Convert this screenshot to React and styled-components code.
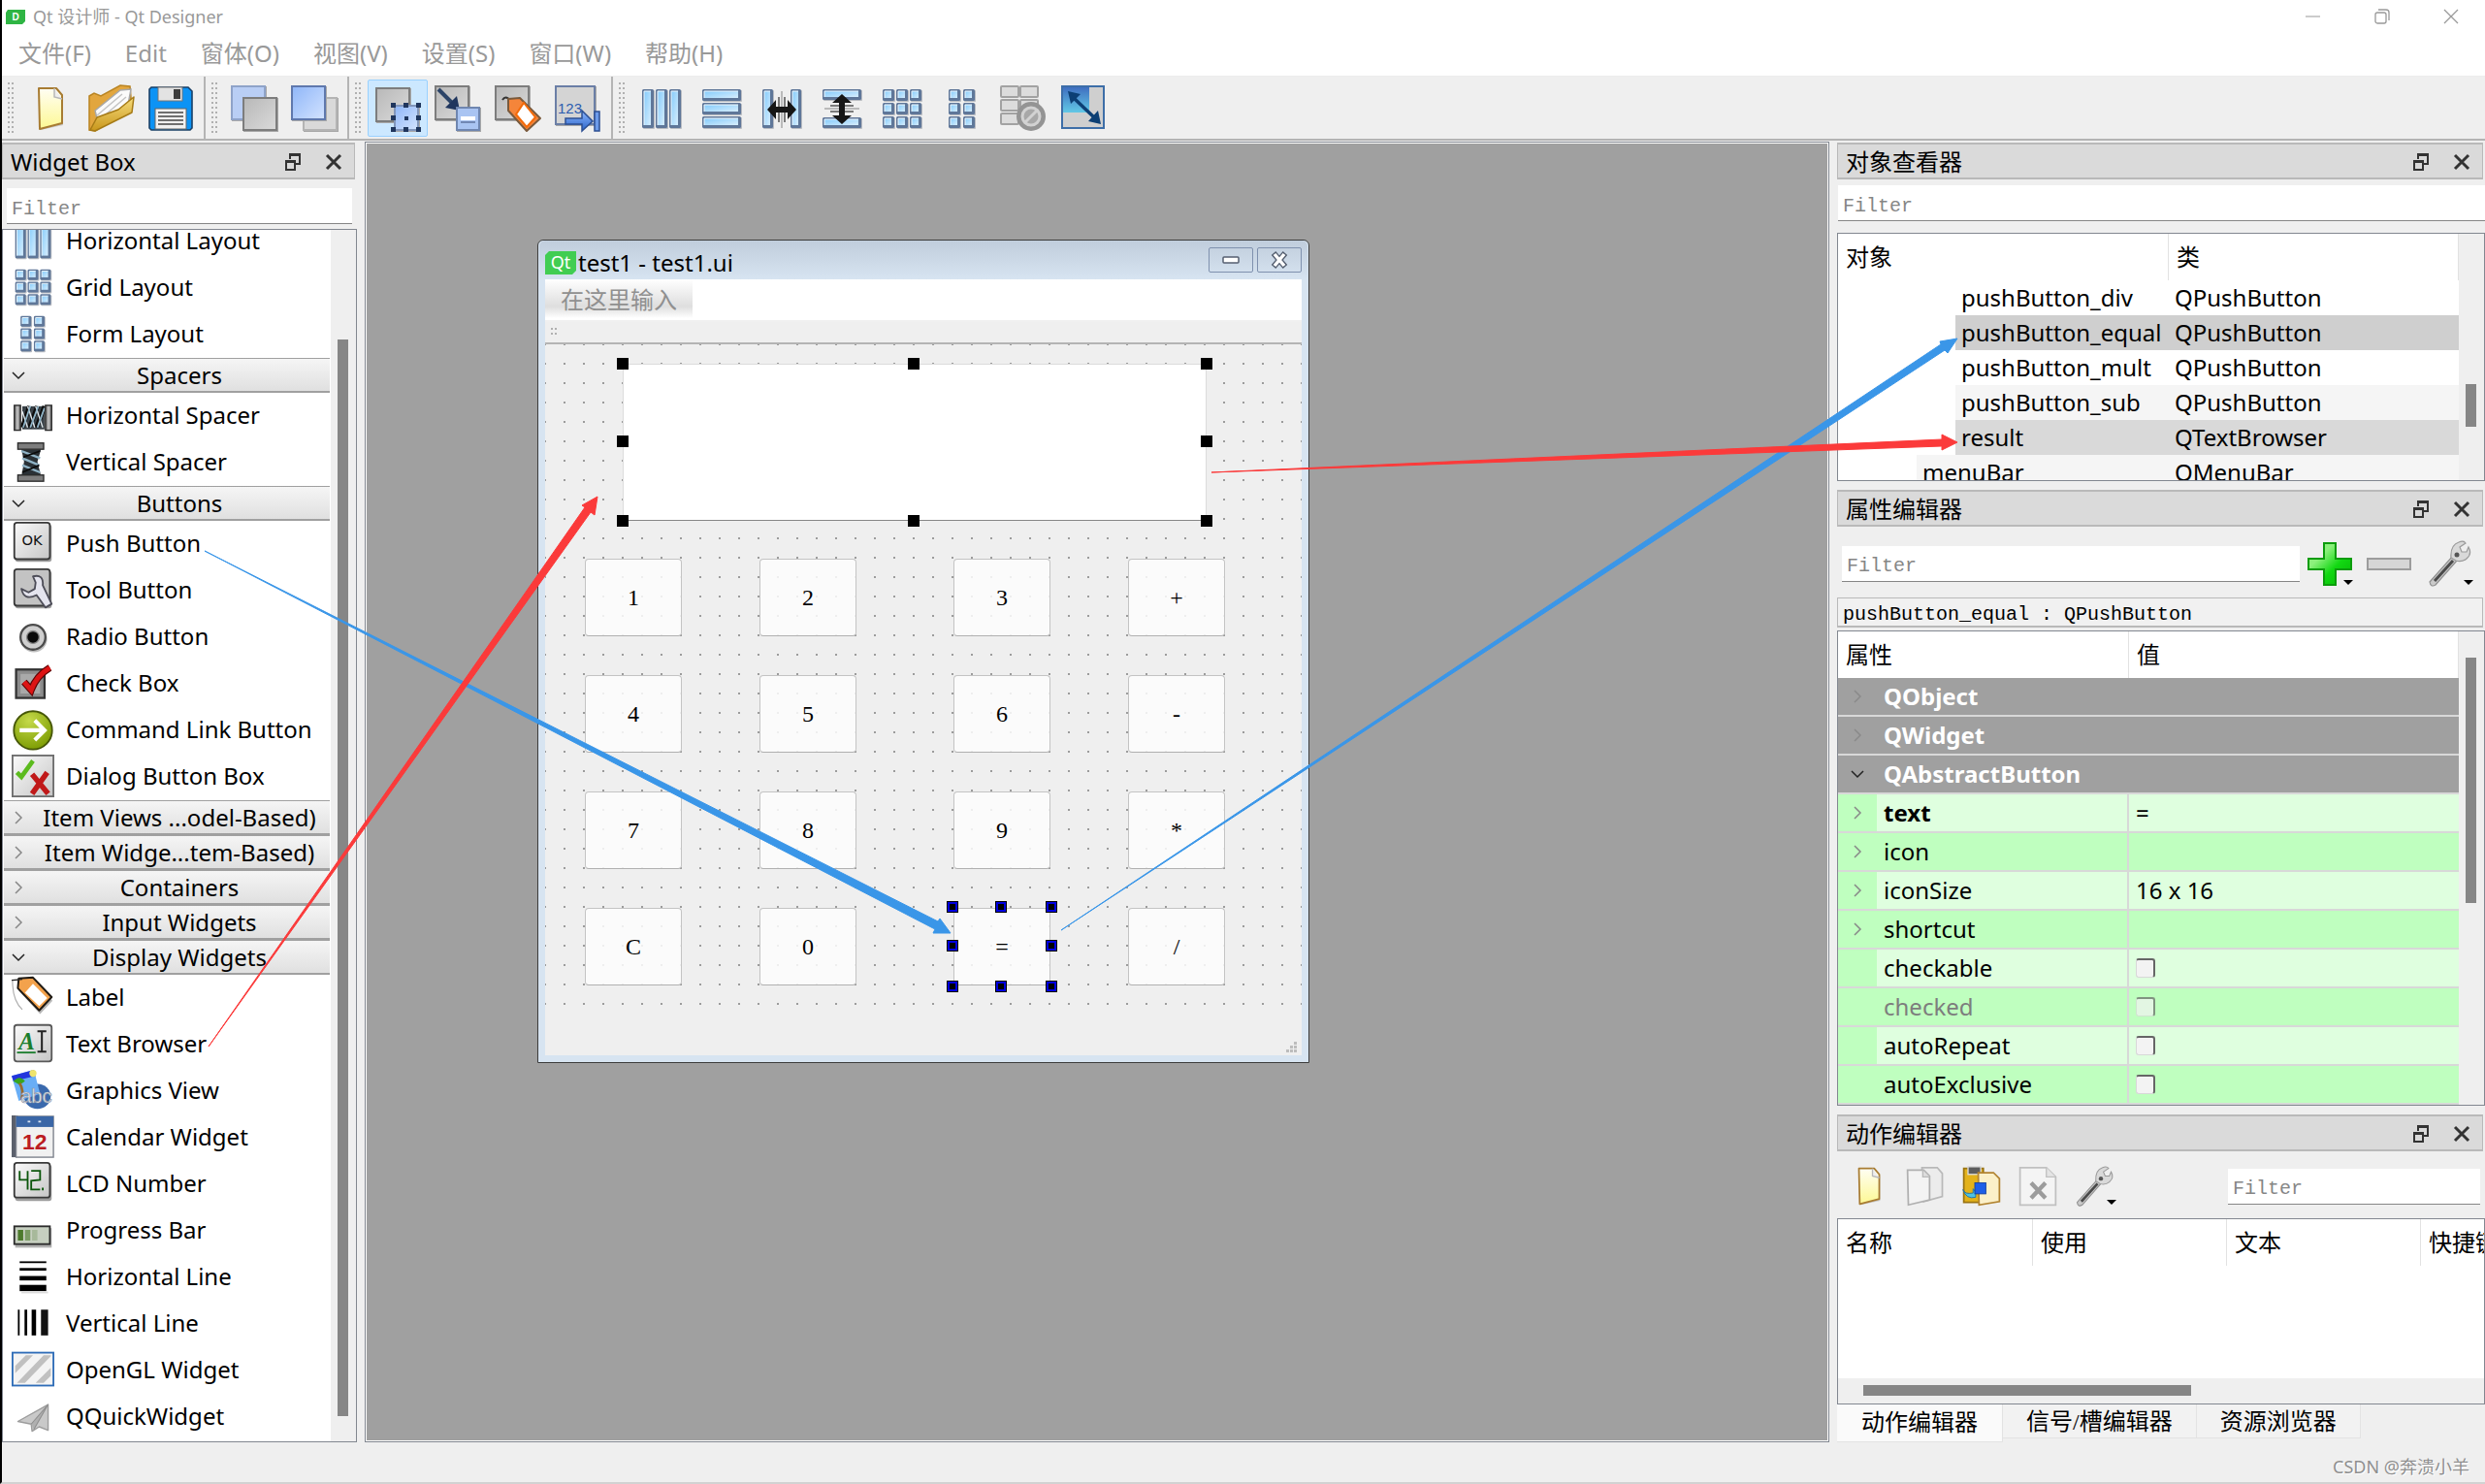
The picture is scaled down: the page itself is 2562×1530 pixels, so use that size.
import React from 'react';
import styled, { createGlobalStyle } from 'styled-components';

const UI_FONT = '"Noto Sans", "Noto Sans CJK SC", sans-serif';
const MONO_FONT = '"Liberation Mono", "Noto Sans CJK SC", monospace';
const SERIF_FONT = '"Liberation Serif", "Noto Sans CJK SC", serif';

const GlobalStyle = createGlobalStyle`
    * {
        box-sizing: border-box;
    }
    body {
        margin: 0;
        background: #efefef;
        color: #000;
        font-family: ${UI_FONT};
        font-size: 24px;
        line-height: 36px;
    }
    button {
        margin: 0;
        padding: 0;
        border: 0;
        background: none;
        color: inherit;
        font: inherit;
    }
    ul {
        margin: 0;
        padding: 0;
        list-style: none;
    }
    svg {
        display: block;
        overflow: visible;
    }
`;

/* ---------- icons, all on a 48 x 48 grid ---------- */

const Defs = () => (
    <DefsSvg width="0" height="0" aria-hidden="true">
        <defs>
            <linearGradient id="bar" x1="0" y1="0" x2="1" y2="1">
                <stop offset="0" stopColor="#84cbfb" />
                <stop offset="1" stopColor="#d6edfd" />
            </linearGradient>
            <linearGradient id="gray" x1="0" y1="0" x2="1" y2="1">
                <stop offset="0" stopColor="#b8b8b8" />
                <stop offset="1" stopColor="#dadada" />
            </linearGradient>
            <linearGradient id="blue" x1="0" y1="0" x2="1" y2="1">
                <stop offset="0" stopColor="#8fb6f8" />
                <stop offset="1" stopColor="#d3e3ff" />
            </linearGradient>
            <linearGradient id="paper" x1="0" y1="0" x2="0" y2="1">
                <stop offset="0" stopColor="#fffef4" />
                <stop offset="1" stopColor="#fdf893" />
            </linearGradient>
            <linearGradient id="gold" x1="0" y1="0" x2="0" y2="1">
                <stop offset="0" stopColor="#f6dc7c" />
                <stop offset="1" stopColor="#c9971c" />
            </linearGradient>
            <linearGradient id="key" x1="0" y1="0" x2="1" y2="1">
                <stop offset="0" stopColor="#fafafa" />
                <stop offset="1" stopColor="#c6c6c6" />
            </linearGradient>
            <linearGradient id="plus" x1="0" y1="0" x2="1" y2="1">
                <stop offset="0.3" stopColor="#8cf07c" />
                <stop offset="0.6" stopColor="#12d812" />
                <stop offset="1" stopColor="#04b404" />
            </linearGradient>
            <linearGradient id="sky" x1="0" y1="0" x2="0" y2="1">
                <stop offset="0" stopColor="#3f6fc0" />
                <stop offset="1" stopColor="#62c8e6" />
            </linearGradient>
            <linearGradient id="steel" x1="0" y1="0" x2="1" y2="0">
                <stop offset="0" stopColor="#5d5d5d" />
                <stop offset="0.5" stopColor="#c9c9c9" />
                <stop offset="1" stopColor="#5d5d5d" />
            </linearGradient>
            <radialGradient id="lime" cx="0.4" cy="0.25" r="0.8">
                <stop offset="0" stopColor="#c5da4a" />
                <stop offset="1" stopColor="#7a9a00" />
            </radialGradient>
            <linearGradient id="arrow" x1="0" y1="0" x2="0" y2="1">
                <stop offset="0" stopColor="#8db8ff" />
                <stop offset="1" stopColor="#2b63c8" />
            </linearGradient>
        </defs>
    </DefsSvg>
);

const DefsSvg = styled('svg')`
    position: absolute;
`;

const Cell = ({ x, y, w, h }) => (
    <>
        <rect x={x + 1} y={y + 1} width={w} height={h} rx="1" fill="#b9bcc2" />
        <rect x={x} y={y} width={w} height={h} rx="1.5" fill="#5f7799" />
        <rect x={x + 2} y={y + 2} width={w - 5} height={h - 5} fill="url(#bar)" />
        <path d={`M${x + 2} ${y + h - 3}V${y + 2}H${x + w - 3}`} fill="none" stroke="#eef8ff" strokeWidth="1" />
    </>
);

const Sheet = ({ x, y, w, h, fill = 'url(#gray)', stroke = '#7d7d7d' }) => (
    <>
        <rect x={x + 1} y={y + 1} width={w} height={h} fill="#a8a8a8" />
        <rect x={x + 1} y={y + 1} width={w - 2} height={h - 2} fill={fill} stroke={stroke} strokeWidth="2" />
    </>
);

const Wrench = () => (
    <>
        <path d="M4 43 L27 17 L32 21 L10 46 Q5 49 4 43Z" fill="#c9c9c9" stroke="#8f8f8f" strokeWidth="1.2" />
        <path d="M9 42 L28 21" stroke="#4a4a4a" strokeWidth="3" />
        <path d="M26 18 Q25 5 34 2 Q39 0 41 3 L35 7 L37 12 L42 12 L44 7 Q48 14 42 19 Q37 23 31 21 Z" fill="#d9d9d9" stroke="#9a9a9a" strokeWidth="1.2" />
        <circle cx="32" cy="15" r="2.5" fill="#555" />
    </>
);

const glyphs = {
    newForm: (
        <>
            <path d="M13 4 H31 L37 11 V41 L14 46 Z" fill="#c8c8c8" />
            <path d="M12 3 H30 L36 10 V39 L13 45 Z" fill="url(#paper)" stroke="#a87c32" strokeWidth="2" strokeLinejoin="round" />
            <path d="M28 3 L28 12 L36 14" fill="#eee" stroke="#b8b8b8" strokeWidth="1.5" />
        </>
    ),
    open: (
        <>
            <path d="M2 11 L7 8 L14 11 L34 0 L44 1 L46 24 L8 47 L2 46 Z" fill="#e2a63e" stroke="#b98422" strokeWidth="1.5" />
            <path d="M8 26 L34 5 L45 4 L42 20 L12 42 Z" fill="#fbfbfb" stroke="#a8a8a8" strokeWidth="1.5" />
            <path d="M10 31 L36 9 M12 36 L40 12" stroke="#c4c4c4" strokeWidth="1.5" />
            <path d="M3 46 L10 33 L32 25 L48 12 L46 28 L8 47 Z" fill="url(#gold)" stroke="#a67b17" strokeWidth="1.5" strokeLinejoin="round" />
        </>
    ),
    save: (
        <>
            <path d="M4 2 H42 L46 6 V44 L44 46 H4 L2 44 V4 Z" fill="#0c93f5" stroke="#1a4067" strokeWidth="1.6" />
            <rect x="11" y="2" width="25" height="14" fill="#e3e3e3" stroke="#777" />
            <rect x="27" y="4" width="7" height="10" fill="#3d3d3d" />
            <rect x="8" y="24" width="32" height="21" fill="#f1f1f1" stroke="#666" />
            <path d="M11 28 H37 M11 32 H37 M11 36 H37 M11 40 H37" stroke="#444" strokeWidth="1.6" />
        </>
    ),
    lower: (
        <>
            <Sheet x={0} y={0} w={36} h={36} fill="#b9cef5" stroke="#8fa3c9" />
            <Sheet x={12} y={12} w={36} h={35} />
        </>
    ),
    raise: (
        <>
            <Sheet x={12} y={12} w={36} h={35} fill="#d9d9d9" stroke="#b4b4b4" />
            <Sheet x={0} y={0} w={36} h={36} fill="url(#blue)" stroke="#5f78ad" />
        </>
    ),
    editWidgets: (
        <>
            <Sheet x={1} y={2} w={36} h={36} />
            <Sheet x={20} y={20} w={26} h={27} fill="url(#blue)" stroke="#8296bb" />
            {[[17, 18], [30, 18], [43, 18], [17, 31], [43, 31], [17, 43], [30, 43], [43, 43]].map(([x, y]) => (
                <rect key={`${x}-${y}`} x={x} y={y} width="5" height="5" fill="#20365e" />
            ))}
            <rect x="31" y="32" width="4" height="4" fill="#20365e" />
        </>
    ),
    editSignals: (
        <>
            <Sheet x={0} y={0} w={36} h={36} />
            <path d="M4 4 L20 20" stroke="#2c4468" strokeWidth="4" />
            <path d="M26 26 L11 23 L23 11 Z" fill="#20365e" />
            <Sheet x={22} y={22} w={25} h={25} fill="#a9c4f2" stroke="#6f86b0" />
            <path d="M27 34 H42" stroke="#fff" strokeWidth="4" />
            <path d="M27 38 H42" stroke="#7188b4" strokeWidth="2" />
        </>
    ),
    editBuddies: (
        <>
            <Sheet x={0} y={0} w={36} h={36} />
            <path d="M8 15 Q12 9 18 18" fill="none" stroke="#333" strokeWidth="2" />
            <path d="M14 14 L26 13 L47 34 L33 47 L14 26 Z" fill="#f5853a" stroke="#7a5a3c" strokeWidth="2" strokeLinejoin="round" />
            <path d="M30 18 L42 33 L33 43 L22 30 Z" fill="#fff" stroke="#f36a0a" strokeWidth="2" />
        </>
    ),
    editTabOrder: (
        <>
            <Sheet x={0} y={0} w={42} h={41} fill="#d4d4d4" stroke="#6b7fa6" />
            <text x="3" y="29" fontFamily="Liberation Sans, sans-serif" fontSize="15" fill="#2b5cb0">123</text>
            <path d="M11 34 H28 V26 L39 37 L28 47 V40 H11 Z" fill="url(#arrow)" stroke="#2c4f93" strokeWidth="1.5" />
            <rect x="41" y="27" width="5" height="20" fill="#6d9bea" stroke="#2c4f93" strokeWidth="1.5" />
        </>
    ),
    layoutH: (
        <>
            <Cell x={4} y={4} w={12} h={40} />
            <Cell x={18} y={4} w={12} h={40} />
            <Cell x={32} y={4} w={12} h={40} />
        </>
    ),
    layoutV: (
        <>
            <Cell x={4} y={4} w={40} h={12} />
            <Cell x={4} y={18} w={40} h={12} />
            <Cell x={4} y={32} w={40} h={12} />
        </>
    ),
    splitH: (
        <>
            <Cell x={4} y={4} w={11} h={40} />
            <Cell x={33} y={4} w={11} h={40} />
            <path d="M24 6 V44" stroke="#a8a8a8" strokeWidth="1.5" />
            <path d="M21 12 V38 M27 12 V38" stroke="#555" strokeWidth="1.5" />
            <path d="M9 25 L18 15 V22 H30 V15 L39 25 L30 35 V28 H18 V35 Z" fill="#161616" />
        </>
    ),
    splitV: (
        <>
            <Cell x={4} y={4} w={40} h={11} />
            <Cell x={4} y={33} w={40} h={11} />
            <path d="M6 24 H42" stroke="#a8a8a8" strokeWidth="1.5" />
            <path d="M12 21 H36 M12 27 H36" stroke="#555" strokeWidth="1.5" />
            <path d="M24 9 L34 18 H27 V31 H34 L24 40 L14 31 H21 V18 H14 Z" fill="#161616" />
        </>
    ),
    grid: (
        <>
            {[4, 18, 32].map(y => [4, 18, 32].map(x => <Cell key={`${x}-${y}`} x={x} y={y} w={12} h={12} />))}
        </>
    ),
    form: (
        <>
            {[4, 18, 32].map(y => [10, 25].map(x => <Cell key={`${x}-${y}`} x={x} y={y} w={12} h={12} />))}
        </>
    ),
    breakLayout: (
        <>
            {[1, 15, 29].map(y => [2, 22].map(x => (
                <rect key={`${x}-${y}`} x={x} y={y} width="18" height="11" rx="1" fill="#dcdcdc" stroke="#a2a2a2" strokeWidth="2" />
            )))}
            <circle cx="33" cy="32" r="15" fill="#949494" />
            <circle cx="33" cy="32" r="9" fill="#a8a8a8" stroke="#d2d2d2" strokeWidth="3" />
            <path d="M27 38 L39 26" stroke="#d2d2d2" strokeWidth="3" />
        </>
    ),
    adjustSize: (
        <>
            <rect x="3" y="1" width="43" height="43" fill="#cfcfcf" stroke="#3d6ea8" strokeWidth="2" />
            <rect x="4" y="2" width="27" height="26" fill="url(#sky)" />
            <path d="M15 13 L36 33" stroke="#0c3f74" strokeWidth="3.5" />
            <path d="M9 6 L22 9 L12 19 Z M43 40 L30 37 L40 26 Z" fill="#0c3f74" />
        </>
    ),
    hSpacer: (
        <>
            <path d="M12 14 V40 H37 V14 Z" fill="#3a4248" />
            <path d="M12 38 L20 14 M20 38 L29 14 M28 38 L37 14" stroke="#0c0c0c" strokeWidth="5" />
            <path d="M12 20 L18 38 M18 14 L26 38 M27 14 L35 38" stroke="#dfe6ea" strokeWidth="1.5" />
            <path d="M13 38 L21 14 M21 38 L30 14 M29 38 L37 16" stroke="#8fb3c6" strokeWidth="2" />
            <rect x="3" y="13" width="7" height="28" fill="url(#steel)" stroke="#2c2c2c" strokeWidth="1.5" />
            <rect x="38" y="13" width="7" height="28" fill="url(#steel)" stroke="#2c2c2c" strokeWidth="1.5" />
        </>
    ),
    vSpacer: (
        <>
            <path d="M11 10 H33 L29 24 L33 40 H11 L14 24 Z" fill="#2a3136" />
            <path d="M11 12 L32 20 M12 20 L31 28 M12 28 L32 36" stroke="#8fb3c6" strokeWidth="2.5" />
            <path d="M32 12 L13 19 M31 28 L12 36" stroke="#0c0c0c" strokeWidth="2" />
            <rect x="7" y="3" width="29" height="7" fill="#7d7d7d" stroke="#2c2c2c" strokeWidth="1.5" />
            <rect x="7" y="39" width="29" height="7" fill="#7d7d7d" stroke="#2c2c2c" strokeWidth="1.5" />
        </>
    ),
    pushButton: (
        <>
            <rect x="4" y="3" width="41" height="42" rx="3" fill="#9d9d9d" />
            <rect x="3" y="1" width="40" height="41" rx="3" fill="url(#key)" stroke="#3a3a3a" strokeWidth="2" />
            <text x="23" y="26" textAnchor="middle" fontFamily="DejaVu Sans, sans-serif" fontSize="16" fill="#111">OK</text>
        </>
    ),
    toolButton: (
        <>
            <rect x="4" y="3" width="41" height="42" rx="3" fill="#9d9d9d" />
            <rect x="3" y="1" width="40" height="41" rx="3" fill="#c3c3c3" stroke="#3a3a3a" strokeWidth="2" />
            <path d="M24 9 Q36 6 35 19 L45 40 L38 44 L28 30 Q14 37 11 23 L19 27 L26 23 L27 16 Z" fill="#e4e4ee" stroke="#4d4d58" strokeWidth="2" strokeLinejoin="round" />
        </>
    ),
    radio: (
        <>
            <circle cx="25" cy="27" r="15" fill="#bdbdbd" />
            <circle cx="24" cy="25" r="14" fill="#cfcfcf" stroke="#4b4b4b" strokeWidth="2.5" />
            <circle cx="24" cy="25" r="7" fill="#0a0a0a" stroke="#8a8a8a" strokeWidth="1.5" />
        </>
    ),
    checkBox: (
        <>
            <rect x="5" y="9" width="32" height="32" fill="#8c8c8c" stroke="#333" strokeWidth="2.5" />
            <rect x="10" y="14" width="22" height="22" fill="#a9a9a9" />
            <path d="M14 23 L22 32 Q28 16 43 7" fill="none" stroke="#5c0505" strokeWidth="8" />
            <path d="M14 23 L22 32 Q28 16 43 7" fill="none" stroke="#dd1414" strokeWidth="5.5" />
        </>
    ),
    commandLink: (
        <>
            <circle cx="24" cy="25" r="21.5" fill="url(#lime)" stroke="#465707" strokeWidth="2" />
            <path d="M9 25 H36 M26 14 L37 25 L26 36" fill="none" stroke="#fff" strokeWidth="4.5" />
        </>
    ),
    dialogBox: (
        <>
            <rect x="1" y="1" width="46" height="46" fill="url(#key)" stroke="#6d6d6d" strokeWidth="2" />
            <path d="M6 20 L11 25 L24 7" fill="none" stroke="#5cbb1e" strokeWidth="5" />
            <path d="M23 22 L41 44 M40 20 L23 44" stroke="#c01919" strokeWidth="6" />
        </>
    ),
    label: (
        <>
            <path d="M0 5 H10 M1 6 Q1 28 12 38" fill="none" stroke="#aaa" strokeWidth="1.2" />
            <path d="M9 7 L24 6 L46 28 L32 43 L8 17 Z" fill="#b9b9b9" />
            <path d="M8 3 L24 2 L45 24 L31 39 L7 14 Z" fill="#f3a24c" stroke="#1f1a14" strokeWidth="2.2" strokeLinejoin="round" />
            <path d="M24 9 L40 25 L31 34 L15 19 Z" fill="#fff" />
            <path d="M0 5 L12 4" stroke="#222" strokeWidth="1.5" />
        </>
    ),
    textBrowser: (
        <>
            <rect x="3" y="3" width="42" height="41" rx="3" fill="url(#key)" stroke="#5a5a5a" strokeWidth="2" />
            <text x="8" y="30" fontFamily="Liberation Serif, serif" fontSize="27" fontStyle="italic" fontWeight="700" fill="#1a7d2c">A</text>
            <path d="M6 34 H27" stroke="#1a7d2c" strokeWidth="2" />
            <path d="M29 10 H39 M34 10 V33 M29 33 H39" stroke="#222" strokeWidth="2.2" />
        </>
    ),
    graphicsView: (
        <>
            <ellipse cx="29" cy="31" rx="15" ry="14" fill="#3a69ad" />
            <path d="M0 8 L25 1 L32 28 L8 36 Z" fill="#69aef5" />
            <path d="M0 8 L25 1 L27 8 L2 14 Z" fill="#2336dd" />
            <path d="M2 14 Q9 6 15 14 L9 18 Z" fill="#37a61e" />
            <path d="M9 16 Q14 24 11 35" fill="none" stroke="#9a6a2c" strokeWidth="3" />
            <circle cx="24" cy="5" r="4" fill="#efe46b" />
            <text x="10" y="38" fontFamily="Liberation Sans, sans-serif" fontSize="22" fill="#eef0f4" stroke="#8d97a8" strokeWidth="0.8">abc</text>
        </>
    ),
    calendar: (
        <>
            <rect x="0" y="0" width="7" height="47" fill="#5a5f6b" />
            <rect x="5" y="1" width="42" height="46" fill="#f1f1f1" stroke="#7d828c" strokeWidth="1.5" />
            <rect x="5" y="1" width="42" height="12" fill="#3a66a6" />
            <path d="M18 7 H21 M30 7 H33" stroke="#dbe5f3" strokeWidth="2" />
            <text x="26" y="38" textAnchor="middle" fontFamily="Liberation Sans, sans-serif" fontSize="25" fontWeight="700" fill="#bb1c22">12</text>
        </>
    ),
    lcd: (
        <>
            <rect x="4" y="3" width="41" height="41" rx="3" fill="#9d9d9d" />
            <rect x="3" y="1" width="40" height="39" rx="3" fill="url(#key)" stroke="#3a3a3a" strokeWidth="2" />
            <path d="M9 10 V20 H18 M18 10 V31 M22 10 H32 V20 L22 21 V31 H32 M35 29 V32" fill="none" stroke="#0b560b" strokeWidth="2" />
        </>
    ),
    progress: (
        <>
            <rect x="4" y="22" width="41" height="22" fill="#b0b0b0" />
            <rect x="3" y="20" width="40" height="20" fill="#c6cfc0" stroke="#2c2c2c" strokeWidth="2" />
            <rect x="7" y="24" width="6" height="12" fill="#4c7a2c" />
            <rect x="15" y="24" width="6" height="12" fill="#7c9c66" />
            <rect x="23" y="24" width="6" height="12" fill="#a7b99b" />
        </>
    ),
    hLine: (
        <>
            <path d="M9 8 H39" stroke="#000" strokeWidth="2" />
            <path d="M9 16 H39" stroke="#000" strokeWidth="3" />
            <path d="M9 26 H39" stroke="#000" strokeWidth="5" />
            <path d="M9 37 H39" stroke="#000" strokeWidth="7" />
            <path d="M11 42 H41" stroke="#dcdcdc" strokeWidth="2" />
        </>
    ),
    vLine: (
        <>
            <path d="M8 9 V38" stroke="#000" strokeWidth="2" />
            <path d="M16 9 V38" stroke="#000" strokeWidth="3" />
            <path d="M25 9 V38" stroke="#000" strokeWidth="5" />
            <path d="M37 9 V38" stroke="#111" strokeWidth="8" />
        </>
    ),
    openGl: (
        <>
            <rect x="1" y="5" width="46" height="37" fill="#f4f4f4" stroke="#2f6db8" strokeWidth="2" />
            <path d="M4 20 L16 8 H24 L4 28 Z M6 39 L36 8 H44 L44 9 L15 39 Z M27 39 L44 22 V31 L36 39 Z" fill="#c0c0c0" />
        </>
    ),
    quickWidget: (
        <>
            <path d="M7 30 L41 11 L41 40 L31 36 L23 41 L22 33 Z" fill="#c9c9c9" stroke="#9d9d9d" strokeWidth="1.5" strokeLinejoin="round" />
            <path d="M22 33 L41 11 L25 39" fill="#b0b0b0" stroke="#8f8f8f" strokeWidth="1.2" />
        </>
    ),
    plus: (
        <path d="M18 3 H30 V19 H46 V30 H30 V46 H18 V30 H2 V19 H18 Z" fill="url(#plus)" stroke="#0c9c0c" strokeWidth="2" />
    ),
    minus: <rect x="2" y="19" width="44" height="11" fill="#d6d6d6" stroke="#9c9c9c" strokeWidth="2" />,
    wrench: <Wrench />,
    copy: (
        <>
            <path d="M20 2 H38 L44 9 V36 L22 42 Z" fill="#ececec" stroke="#b9b9b9" strokeWidth="2" />
            <path d="M3 5 H22 L29 12 V40 L4 46 Z" fill="#f3f3f3" stroke="#b0b0b0" strokeWidth="2" />
            <path d="M21 5 V13 H29" fill="#ddd" stroke="#b9b9b9" strokeWidth="1.5" />
        </>
    ),
    paste: (
        <>
            <path d="M3 3 H26 V43 H3 Z" fill="#e3b21a" stroke="#9a7412" strokeWidth="2" />
            <rect x="8" y="1" width="15" height="9" fill="#5d5d5d" stroke="#ddd" strokeWidth="1.5" />
            <path d="M20 8 H38 L45 15 V42 L21 46 Z" fill="#fbf0c9" stroke="#b28431" strokeWidth="2" />
            <path d="M2 28 Q4 34 14 32 V27 L17 31 V37 Q6 40 2 28 Z" fill="#4cc3e4" stroke="#1b6fa8" strokeWidth="1" />
            <rect x="16" y="20" width="13" height="13" fill="#1d5fe8" stroke="#123f9e" strokeWidth="1" />
        </>
    ),
    remove: (
        <>
            <path d="M3 2 H34 L45 13 V46 H3 Z" fill="#f4f4f4" stroke="#c0c0c0" strokeWidth="2" />
            <path d="M34 2 V13 H45" fill="#e4e4e4" stroke="#c0c0c0" strokeWidth="1.5" />
            <path d="M16 20 L33 38 M33 20 L16 38" stroke="#9c9c9c" strokeWidth="5" />
        </>
    )
};

const Icon = ({ name, size = 48 }) => (
    <svg width={size} height={size} viewBox="0 0 48 48" aria-hidden="true">{glyphs[name]}</svg>
);

/* ---------- main window ---------- */

const Window = styled('div')`
    position: relative;
    display: flex;
    flex-direction: column;
    min-height: 100vh;
    border-left: 2px solid #000;
    border-bottom: 2px solid #d2d2d2;
    overflow: hidden;
`;

const TitleBar = styled('header')`
    display: flex;
    align-items: center;
    height: 34px;
    padding-left: 4px;
    gap: 8px;
    background: #fff;
    color: #999;
    font-size: 18px;
`;

const WindowButtons = styled('div')`
    display: flex;
    margin-left: auto;
    button {
        display: flex;
        align-items: center;
        justify-content: center;
        width: 71px;
        height: 34px;
    }
`;

const MenuBar = styled('nav')`
    display: flex;
    height: 45px;
    background: #fff;
    border-bottom: 1px solid #ececec;
    color: #999;
    button {
        padding: 0 18px 2px 17px;
    }
`;

const ToolBars = styled('div')`
    display: flex;
    height: 66px;
    background: #efefef;
    border-bottom: 2px solid #b4b4b4;
`;

const ToolGroup = styled('div')`
    display: flex;
    padding: 3px 3px 0 6px;
    border-right: ${props => props.$last ? '0' : '2px solid #b4b4b4'};
`;

const Grip = styled('span')`
    width: 6px;
    height: ${props => props.$small ? '10px' : '54px'};
    margin: ${props => props.$small ? '0' : '3px 7px 0 0'};
    background-image: radial-gradient(circle at 1px 1px, #b0b0b0 1px, transparent 1px);
    background-size: 4px 5px;
`;

const ToolButton = styled('button')`
    display: flex;
    align-items: center;
    justify-content: center;
    width: 62px;
    height: 59px;
    border: 1px solid ${props => props.$active ? '#99d1ff' : 'transparent'};
    border-radius: 2px;
    background: ${props => props.$active ? '#cce8ff' : 'transparent'};
`;

const Body = styled('main')`
    flex: 1;
    display: grid;
    grid-template-columns: 366px minmax(0, 1fr) 668px;
    column-gap: 8px;
    padding-top: 1px;
`;

const StatusBar = styled('footer')`
    display: flex;
    align-items: center;
    justify-content: flex-end;
    height: 41px;
    padding: 8px 16px 0 0;
    color: #8f8f8f;
    font-size: 18px;
    text-shadow: 1px 1px 0 #fff;
`;

/* ---------- docks ---------- */

const DockColumn = styled('div')`
    display: flex;
    flex-direction: column;
    gap: 9px;
    padding-top: 1px;
    min-width: 0;
`;

const DockSection = styled('section')`
    display: flex;
    flex-direction: column;
    flex: ${props => props.$grow ? '1' : 'none'};
`;

const DockTitle = styled('div')`
    display: flex;
    align-items: center;
    height: 38px;
    margin-right: 2px;
    padding: 2px 0 0 8px;
    background: #dadada;
    border: 2px solid #b9b9b9;
    border-width: 2px 1px;
    h2 {
        flex: 1;
        margin: 0;
        font-size: 24px;
        font-weight: 400;
    }
    button {
        display: flex;
        justify-content: center;
        width: 42px;
    }
`;

const FilterInput = styled('input')`
    width: ${props => props.$width || 'auto'};
    height: 37px;
    margin: ${props => props.$margin || '0'};
    padding: 6px 5px 0;
    background: #fff;
    border: 0;
    border-bottom: 1px solid #868686;
    border-radius: 0;
    outline: 0;
    font-family: ${MONO_FONT};
    font-size: 20px;
    &::placeholder {
        color: #868686;
        opacity: 1;
    }
`;

const Frame = styled('div')`
    display: flex;
    flex-direction: ${props => props.$column ? 'column' : 'row'};
    flex: ${props => props.$grow ? '1' : 'none'};
    height: ${props => props.$height || 'auto'};
    margin-top: ${props => props.$top || '0'};
    border: 1px solid #828790;
    background: #fff;
    overflow: hidden;
`;

const ScrollTrack = styled('div')`
    flex: none;
    width: 26px;
    padding: ${props => props.$offset} 0 0 7px;
    background: #efefef;
    &::before {
        content: '';
        display: block;
        width: 11px;
        height: ${props => props.$length};
        background: #868686;
    }
`;

const HScrollTrack = styled('div')`
    height: 26px;
    margin-top: auto;
    padding: 7px 0 0 26px;
    background: #efefef;
    &::before {
        content: '';
        display: block;
        width: 338px;
        height: 11px;
        background: #868686;
    }
`;

const WidgetList = styled('ul')`
    flex: 1;
    margin: -12px 1px 0 1px;
`;

const WidgetButton = styled('button')`
    display: flex;
    align-items: center;
    gap: 12px;
    width: 100%;
    height: 48px;
    padding: 0 0 2px 8px;
    white-space: nowrap;
`;

const CategoryButton = styled('button')`
    display: flex;
    align-items: center;
    width: 100%;
    height: 36px;
    padding: 0 0 0 8px;
    background: linear-gradient(#f5f5f5, #e0e0e0);
    border-top: 1px solid #a0a0a0;
    border-bottom: 2px solid #a0a0a0;
    white-space: nowrap;
    span {
        flex: 1;
        padding-left: 4px;
        text-align: center;
    }
`;

const DataTable = styled('table')`
    flex: ${props => props.$open ? 'none' : '1'};
    width: 100%;
    table-layout: fixed;
    border-spacing: 0;
    align-self: flex-start;
    th {
        height: 48px;
        padding: 0 8px;
        border-right: 1px solid #e2e2e2;
        font-weight: 400;
        text-align: left;
        white-space: nowrap;
        overflow: hidden;
    }
    th:last-child {
        border-right: ${props => props.$open ? '0' : '1px solid #e2e2e2'};
    }
`;

const rowColors = { selected: '#cfcfcf', related: '#d9d9d9', alt: '#f5f5f5' };

const ObjectRow = styled('tr')`
    td {
        height: 36px;
        padding: 0;
        white-space: nowrap;
    }
    td:first-child {
        padding-left: ${props => props.$indent};
    }
    td:last-child,
    td > span {
        background: ${props => rowColors[props.$tone] || '#fff'};
        padding-left: 6px;
    }
    td > span {
        display: block;
    }
`;

const GroupRow = styled('tr')`
    td {
        height: 40px;
        padding: 0;
        background: #a0a0a0;
        border-bottom: 2px solid #d8d8d8;
        color: #fff;
        font-weight: 700;
    }
`;

const PropertyRow = styled('tr')`
    color: ${props => props.$disabled ? '#7d7d7d' : '#000'};
    td {
        height: 40px;
        padding: 0;
        background: ${props => props.$dark ? '#bfffbf' : '#dfffdf'};
        border-bottom: 2px solid #d8d8d8;
    }
    td:first-child {
        border-right: 2px solid #d8d8d8;
        font-weight: ${props => props.$bold ? '700' : '400'};
    }
    td:last-child {
        padding-left: 7px;
    }
`;

const NameCell = styled('div')`
    display: flex;
    align-items: center;
    height: 38px;
`;

const Branch = styled('span')`
    display: flex;
    align-items: center;
    justify-content: center;
    width: 40px;
    height: 38px;
    margin-right: 7px;
    background: ${props => props.$green ? '#bfffbf' : 'transparent'};
`;

const CheckBox = styled('input')`
    appearance: none;
    display: block;
    width: 20px;
    height: 20px;
    margin: 0;
    border: 1px solid #d8d8d8;
    border-top: 2px solid #666;
    border-right: 2px solid #666;
    border-radius: 3px;
    background: #f3f3f3;
    opacity: ${props => props.disabled ? '0.7' : '1'};
`;

const PropertyTools = styled('div')`
    display: flex;
    align-items: center;
    height: 73px;
    padding: 3px 6px 0 5px;
    gap: 6px;
`;

const IconButton = styled('button')`
    position: relative;
    display: flex;
    justify-content: center;
    width: ${props => props.$width || '58px'};
`;

const MenuCaret = styled('span')`
    position: absolute;
    right: ${props => props.$right || '6px'};
    bottom: 2px;
    border: 5px solid transparent;
    border-top-color: #000;
    border-bottom: 0;
`;

const ObjectName = styled('div')`
    height: 31px;
    margin-right: 2px;
    padding: 2px 5px 0;
    border: 1px solid #b9b9b9;
    border-bottom-width: 2px;
    background: #f1f1f1;
    font-family: ${MONO_FONT};
    font-size: 20px;
    line-height: 30px;
`;

const ActionTools = styled('div')`
    display: flex;
    align-items: center;
    height: 69px;
    padding: 3px 5px 0 4px;
`;

const TabBar = styled('div')`
    display: flex;
    align-items: flex-start;
    height: 39px;
    font-family: ${SERIF_FONT};
`;

const Tab = styled('button')`
    height: ${props => props.$active ? '39px' : '35px'};
    padding: 0 ${props => props.$active ? '25px' : '24px'};
    background: ${props => props.$active ? '#fafafa' : '#f2f2f2'};
    border-right: 1px solid #e3e3e3;
    border-bottom: 1px solid #e3e3e3;
`;

/* ---------- form under edit ---------- */

const MdiArea = styled('div')`
    position: relative;
    min-width: 0;
    background: #a0a0a0;
    border: 1px solid #828790;
    box-shadow: inset 0 0 0 1px #fff;
`;

const FormWindow = styled('div')`
    position: absolute;
    left: 177px;
    top: 100px;
    width: 796px;
    padding: 0 7px 7px;
    background: #d7e4f1;
    border: 1px solid #3c3c3c;
    border-radius: 6px 6px 0 0;
`;

const FormTitle = styled('div')`
    display: flex;
    align-items: center;
    height: 40px;
    margin: 0 -6px;
    padding: 6px 5px 0 6px;
    gap: 2px;
    background: linear-gradient(#c0cddc, #d7e4f1);
    border-radius: 6px 6px 0 0;
    span {
        flex: 1;
    }
    button {
        display: flex;
        align-items: center;
        justify-content: center;
        width: 46px;
        height: 26px;
        margin: -6px 1px 0;
        border: 1px solid #7f91ae;
        border-radius: 2px;
    }
`;

const FormMenu = styled('div')`
    height: 44px;
    background: #fff;
    border-bottom: 2px solid #f0f0f0;
    color: #909090;
    button {
        height: 40px;
        padding: 2px 16px 0;
        background: linear-gradient(#fff, #dedede 70%, #fff);
    }
`;

const FormToolBar = styled('div')`
    height: 23px;
    padding: 6px 6px;
    background: #efefef;
    border-bottom: 2px solid #b4b4b4;
    display: flex;
`;

const Canvas = styled('div')`
    position: relative;
    height: 682px;
    background-color: #efefef;
    background-image: radial-gradient(circle at 1px 1px, #9c9c9c 1px, transparent 1px);
    background-size: 20px 20px;
    background-position: -1px -1px;
`;

const FormStatus = styled('div')`
    display: flex;
    justify-content: flex-end;
    align-items: flex-end;
    height: 51px;
    padding: 0 4px 2px;
    background: #efefef;
`;

const TextBrowser = styled('div')`
    position: absolute;
    left: 80px;
    top: 20px;
    width: 602px;
    height: 162px;
    background: #fff;
    border: 1px solid #dcdcdc;
    border-bottom-color: #868686;
`;

const PadButton = styled('button')`
    position: absolute;
    left: ${props => props.$x}px;
    top: ${props => props.$y}px;
    width: 100px;
    height: 80px;
    border: 1px solid #c4c4c4;
    border-bottom-color: #b0b0b0;
    border-radius: 4px;
    background: rgba(253, 253, 253, 0.85);
    font-family: ${SERIF_FONT};
    font-size: 24px;
`;

const Handle = styled('span')`
    position: absolute;
    left: ${props => props.$x - 6}px;
    top: ${props => props.$y - 6}px;
    width: 12px;
    height: 12px;
    background: #000;
    border: 1px solid #000;
    box-shadow: ${props => props.$blue ? 'inset 0 0 0 2px #0000e0' : 'none'};
`;

const Annotations = styled('svg')`
    position: absolute;
    left: -2px;
    top: 0;
    width: 100%;
    height: 100%;
    pointer-events: none;
`;

/* ---------- data ---------- */

const menus = ['文件(F)', 'Edit', '窗体(O)', '视图(V)', '设置(S)', '窗口(W)', '帮助(H)'];

const toolGroups = [
    ['newForm', 'open', 'save'],
    ['lower', 'raise'],
    ['editWidgets', 'editSignals', 'editBuddies', 'editTabOrder'],
    ['layoutH', 'layoutV', 'splitH', 'splitV', 'grid', 'form', 'breakLayout', 'adjustSize']
];

const widgets = [
    { icon: 'layoutH', text: 'Horizontal Layout' },
    { icon: 'grid', text: 'Grid Layout' },
    { icon: 'form', text: 'Form Layout' },
    { category: 'Spacers', open: true },
    { icon: 'hSpacer', text: 'Horizontal Spacer' },
    { icon: 'vSpacer', text: 'Vertical Spacer' },
    { category: 'Buttons', open: true },
    { icon: 'pushButton', text: 'Push Button' },
    { icon: 'toolButton', text: 'Tool Button' },
    { icon: 'radio', text: 'Radio Button' },
    { icon: 'checkBox', text: 'Check Box' },
    { icon: 'commandLink', text: 'Command Link Button' },
    { icon: 'dialogBox', text: 'Dialog Button Box' },
    { category: 'Item Views ...odel-Based)' },
    { category: 'Item Widge...tem-Based)' },
    { category: 'Containers' },
    { category: 'Input Widgets' },
    { category: 'Display Widgets', open: true },
    { icon: 'label', text: 'Label' },
    { icon: 'textBrowser', text: 'Text Browser' },
    { icon: 'graphicsView', text: 'Graphics View' },
    { icon: 'calendar', text: 'Calendar Widget' },
    { icon: 'lcd', text: 'LCD Number' },
    { icon: 'progress', text: 'Progress Bar' },
    { icon: 'hLine', text: 'Horizontal Line' },
    { icon: 'vLine', text: 'Vertical Line' },
    { icon: 'openGl', text: 'OpenGL Widget' },
    { icon: 'quickWidget', text: 'QQuickWidget' }
];

const objects = [
    { name: 'pushButton_div', type: 'QPushButton' },
    { name: 'pushButton_equal', type: 'QPushButton', tone: 'selected' },
    { name: 'pushButton_mult', type: 'QPushButton' },
    { name: 'pushButton_sub', type: 'QPushButton', tone: 'alt' },
    { name: 'result', type: 'QTextBrowser', tone: 'related' },
    { name: 'menuBar', type: 'QMenuBar', tone: 'alt', indent: '81px' }
];

const groups = [
    { name: 'QObject' },
    { name: 'QWidget' },
    { name: 'QAbstractButton', open: true }
];

const properties = [
    { name: 'text', value: '=', branch: true, bold: true },
    { name: 'icon', value: '', branch: true },
    { name: 'iconSize', value: '16 x 16', branch: true },
    { name: 'shortcut', value: '', branch: true },
    { name: 'checkable', check: true },
    { name: 'checked', check: true, disabled: true },
    { name: 'autoRepeat', check: true },
    { name: 'autoExclusive', check: true }
];

const padKeys = [
    ['1', '2', '3', '+'],
    ['4', '5', '6', '-'],
    ['7', '8', '9', '*'],
    ['C', '0', '=', '/']
];
const padX = [41, 221, 421, 601];
const padY = [221, 341, 461, 581];

const handlesFor = (xs, ys) =>
    ys.flatMap((y, row) => xs.map((x, col) => ({ x, y, center: row === 1 && col === 1 }))).filter(h => !h.center);

/* ---------- parts ---------- */

const Chevron = ({ open, color }) => (
    <svg width="14" height="14" viewBox="0 0 14 14" aria-hidden="true">
        <path d={open ? 'M1 4 L7 10 L13 4' : 'M4 1 L10 7 L4 13'} fill="none" stroke={color} strokeWidth="1.5" />
    </svg>
);

const Title = ({ text }) => (
    <DockTitle>
        <h2>{text}</h2>
        <button type="button" aria-label="Float">
            <svg width="18" height="20" viewBox="0 0 18 20">
                <path d="M6 7 V2 H16 V12 H12 M6 3 H16" fill="none" stroke="#333" strokeWidth="2" />
                <path d="M2 9 H11 V18 H2 Z M2 10 H11" fill="#dadada" stroke="#333" strokeWidth="2" />
            </svg>
        </button>
        <button type="button" aria-label="Close">
            <svg width="16" height="16" viewBox="0 0 16 16">
                <path d="M1 1 L15 15 M15 1 L1 15" stroke="#333" strokeWidth="3" />
            </svg>
        </button>
    </DockTitle>
);

const WidgetBox = () => (
    <DockColumn>
        <DockSection $grow>
            <Title text="Widget Box" />
            <FilterInput $margin="9px 5px 5px" placeholder="Filter" aria-label="Filter widgets" />
            <Frame $grow>
                <WidgetList>
                    {widgets.map(item => (
                        <li key={item.category || item.text}>
                            {item.category ? (
                                <CategoryButton type="button">
                                    <Chevron open={item.open} color={item.open ? '#222' : '#888'} />
                                    <span>{item.category}</span>
                                </CategoryButton>
                            ) : (
                                <WidgetButton type="button">
                                    <Icon name={item.icon} size={44} />
                                    {item.text}
                                </WidgetButton>
                            )}
                        </li>
                    ))}
                </WidgetList>
                <ScrollTrack $offset="113px" $length="1110px" />
            </Frame>
        </DockSection>
    </DockColumn>
);

const FormEditor = () => (
    <MdiArea>
        <FormWindow>
            <FormTitle>
                <svg width="32" height="24" viewBox="0 0 32 24" aria-hidden="true">
                    <path d="M4 0 H32 V20 L28 24 H0 V4 Z" fill="#41cd52" />
                    <text x="16" y="18" textAnchor="middle" fontFamily="Noto Sans, sans-serif" fontSize="18" fill="#fff">Qt</text>
                </svg>
                <span>test1 - test1.ui</span>
                <button type="button" aria-label="Minimize form">
                    <svg width="18" height="8" viewBox="0 0 18 8">
                        <rect x="1" y="1" width="16" height="6" rx="1" fill="#fff" stroke="#555f70" strokeWidth="1.5" />
                    </svg>
                </button>
                <button type="button" aria-label="Close form">
                    <svg width="18" height="16" viewBox="0 0 18 16">
                        <path d="M3 1 L15 15 M15 1 L3 15" stroke="#555f70" strokeWidth="6" />
                        <path d="M4 2 L14 14 M14 2 L4 14" stroke="#fff" strokeWidth="3.5" />
                    </svg>
                </button>
            </FormTitle>
            <FormMenu>
                <button type="button">在这里输入</button>
            </FormMenu>
            <FormToolBar>
                <Grip $small />
            </FormToolBar>
            <Canvas>
                <TextBrowser />
                {padKeys.map((row, r) => row.map((key, c) => (
                    <PadButton type="button" key={key} $x={padX[c]} $y={padY[r]}>{key}</PadButton>
                )))}
                {handlesFor([80, 380, 682], [20, 100, 182]).map(({ x, y }) => (
                    <Handle key={`${x}-${y}`} $x={x} $y={y} />
                ))}
                {handlesFor([420, 470, 522], [580, 620, 662]).map(({ x, y }) => (
                    <Handle key={`${x}-${y}`} $x={x} $y={y} $blue />
                ))}
            </Canvas>
            <FormStatus>
                <svg width="12" height="12" viewBox="0 0 12 12" aria-hidden="true">
                    <path d="M8 0h3v3h-3z M4 4h3v3h-3z M8 4h3v3h-3z M0 8h3v3h-3z M4 8h3v3h-3z M8 8h3v3h-3z" fill="#bdbdbd" />
                </svg>
            </FormStatus>
        </FormWindow>
    </MdiArea>
);

const ObjectInspector = () => (
    <DockSection>
        <Title text="对象查看器" />
        <FilterInput $margin="6px 0 0 1px" placeholder="Filter" aria-label="Filter objects" />
        <Frame $top="12px" $height="256px">
            <DataTable>
                <colgroup>
                    <col width="341" />
                    <col />
                </colgroup>
                <thead>
                    <tr>
                        <th>对象</th>
                        <th>类</th>
                    </tr>
                </thead>
                <tbody>
                    {objects.map(item => (
                        <ObjectRow key={item.name} $tone={item.tone} $indent={item.indent || '121px'}>
                            <td><span>{item.name}</span></td>
                            <td>{item.type}</td>
                        </ObjectRow>
                    ))}
                </tbody>
            </DataTable>
            <ScrollTrack $offset="155px" $length="44px" />
        </Frame>
    </DockSection>
);

const PropertyEditor = () => (
    <DockSection>
        <Title text="属性编辑器" />
        <PropertyTools>
            <FilterInput $width="472px" placeholder="Filter" aria-label="Filter properties" />
            <IconButton type="button" $width="50px" aria-label="Add dynamic property">
                <Icon name="plus" />
                <MenuCaret $right="1px" />
            </IconButton>
            <IconButton type="button" $width="60px" aria-label="Remove dynamic property">
                <Icon name="minus" />
            </IconButton>
            <IconButton type="button" $width="52px" aria-label="Configure property editor">
                <Icon name="wrench" />
                <MenuCaret $right="1px" />
            </IconButton>
        </PropertyTools>
        <ObjectName>pushButton_equal : QPushButton</ObjectName>
        <Frame $top="3px" $height="490px">
            <DataTable>
                <colgroup>
                    <col width="300" />
                    <col />
                </colgroup>
                <thead>
                    <tr>
                        <th>属性</th>
                        <th>值</th>
                    </tr>
                </thead>
                <tbody>
                    {groups.map(group => (
                        <GroupRow key={group.name}>
                            <td colSpan={2}>
                                <NameCell>
                                    <Branch><Chevron open={group.open} color={group.open ? '#222' : '#8a8a8a'} /></Branch>
                                    {group.name}
                                </NameCell>
                            </td>
                        </GroupRow>
                    ))}
                    {properties.map((item, i) => (
                        <PropertyRow key={item.name} $dark={i % 2 === 1} $bold={item.bold} $disabled={item.disabled}>
                            <td>
                                <NameCell>
                                    <Branch $green>{item.branch && <Chevron color="#888" />}</Branch>
                                    {item.check ? <label htmlFor={item.name}>{item.name}</label> : item.name}
                                </NameCell>
                            </td>
                            <td>
                                {item.check ? <CheckBox type="checkbox" id={item.name} disabled={item.disabled} /> : item.value}
                            </td>
                        </PropertyRow>
                    ))}
                </tbody>
            </DataTable>
            <ScrollTrack $offset="27px" $length="253px" />
        </Frame>
    </DockSection>
);

const ActionEditor = () => (
    <DockSection $grow>
        <Title text="动作编辑器" />
        <ActionTools>
            {['newForm', 'copy', 'paste', 'remove', 'wrench'].map(name => (
                <IconButton type="button" key={name} aria-label={name}>
                    <Icon name={name} size={42} />
                    {name === 'wrench' && <MenuCaret />}
                </IconButton>
            ))}
            <FilterInput $width="260px" $margin="0 0 0 auto" placeholder="Filter" aria-label="Filter actions" />
        </ActionTools>
        <Frame $column $grow>
            <DataTable $open>
                <colgroup>
                    <col width="201" />
                    <col width="200" />
                    <col width="200" />
                    <col />
                </colgroup>
                <thead>
                    <tr>
                        <th>名称</th>
                        <th>使用</th>
                        <th>文本</th>
                        <th>快捷键</th>
                    </tr>
                </thead>
            </DataTable>
            <HScrollTrack />
        </Frame>
        <TabBar>
            <Tab type="button" $active>动作编辑器</Tab>
            <Tab type="button">信号/槽编辑器</Tab>
            <Tab type="button">资源浏览器</Tab>
        </TabBar>
    </DockSection>
);

const App = () => (
    <Window>
        <GlobalStyle />
        <Defs />
        <TitleBar>
            <svg width="20" height="15" viewBox="0 0 20 15" aria-hidden="true">
                <path d="M2 0 H20 V12 L17 15 H0 V3 Z" fill="#2fb544" />
                <text x="10" y="11" textAnchor="middle" fontFamily="Liberation Sans, sans-serif" fontSize="10" fontWeight="700" fill="#fff">D</text>
            </svg>
            Qt 设计师 - Qt Designer
            <WindowButtons>
                <button type="button" aria-label="Minimize">
                    <svg width="16" height="16" viewBox="0 0 16 16"><path d="M0 8 H15" stroke="#999" strokeWidth="1" /></svg>
                </button>
                <button type="button" aria-label="Restore">
                    <svg width="16" height="16" viewBox="0 0 16 16">
                        <rect x="1" y="4" width="11" height="11" rx="2" fill="none" stroke="#999" strokeWidth="1.3" />
                        <path d="M4 1 H12 Q15 1 15 4 V12" fill="none" stroke="#999" strokeWidth="1.3" />
                    </svg>
                </button>
                <button type="button" aria-label="Close">
                    <svg width="16" height="16" viewBox="0 0 16 16"><path d="M1 1 L15 15 M15 1 L1 15" stroke="#999" strokeWidth="1.3" /></svg>
                </button>
            </WindowButtons>
        </TitleBar>
        <MenuBar>
            {menus.map(text => <button type="button" key={text}>{text}</button>)}
        </MenuBar>
        <ToolBars>
            {toolGroups.map((names, i) => (
                <ToolGroup key={names[0]} $last={i === toolGroups.length - 1}>
                    <Grip />
                    {names.map(name => (
                        <ToolButton type="button" key={name} aria-label={name} $active={name === 'editWidgets'}>
                            <Icon name={name} />
                        </ToolButton>
                    ))}
                </ToolGroup>
            ))}
        </ToolBars>
        <Body>
            <WidgetBox />
            <FormEditor />
            <DockColumn>
                <ObjectInspector />
                <PropertyEditor />
                <ActionEditor />
            </DockColumn>
        </Body>
        <StatusBar>CSDN @奔溃小羊</StatusBar>
        <Annotations aria-hidden="true">
            <path d="M211 568 L967 950 L969 947 L980 962 L962 962 L964 958 Z" fill="#3a96e8" stroke="#3a96e8" strokeWidth="1" />
            <path d="M1094 959 L2001 355 L2000 352 L2018 349 L2008 364 L2005 361 Z" fill="#3a96e8" stroke="#3a96e8" strokeWidth="1" />
            <path d="M215 1079 L603 523 L600 521 L616 512 L613 531 L609 528 Z" fill="#fb3a3a" stroke="#fb3a3a" strokeWidth="1" />
            <path d="M1249 487 L2002 453 L2002 448 L2018 456 L2002 464 L2002 460 Z" fill="#fb3a3a" stroke="#fb3a3a" strokeWidth="1" />
        </Annotations>
    </Window>
);

export default App;
